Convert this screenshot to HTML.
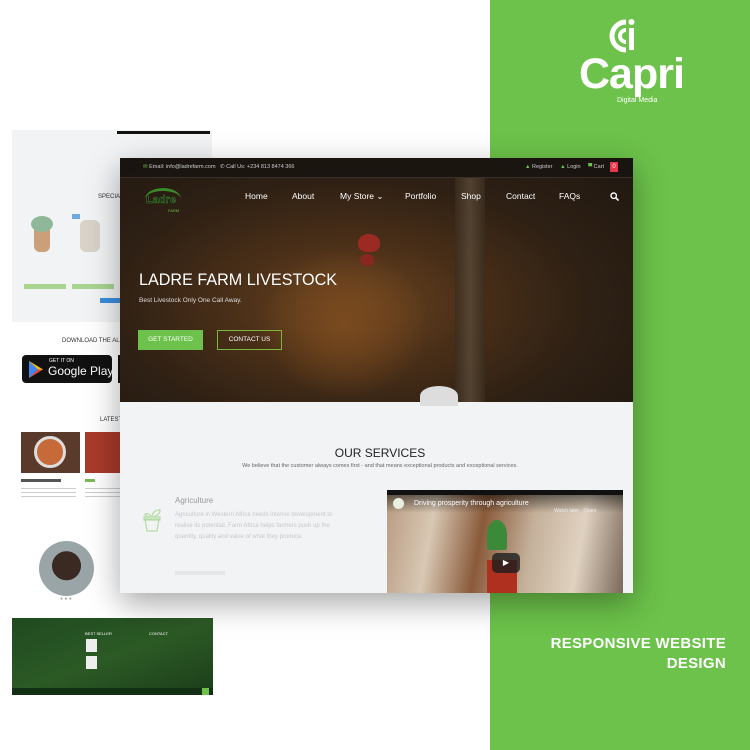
<!DOCTYPE html>
<html><head><meta charset="utf-8"><style>
*{margin:0;padding:0;box-sizing:border-box}
body{width:750px;height:750px;position:relative;overflow:hidden;background:#fff;font-family:"Liberation Sans",sans-serif}
.a{position:absolute}
.green{left:490px;top:0;width:260px;height:750px;background:#6cc24a}
.t{white-space:nowrap}
</style></head><body>
<div class="a green"></div>
<svg class="a" style="left:608px;top:16px" width="36" height="40" viewBox="0 0 36 40">
<path d="M18 6 A14 14 0 1 0 18 34" stroke="#fff" stroke-width="5" fill="none"/>
<path d="M18 14 A6 6 0 1 0 18 26" stroke="#fff" stroke-width="4" fill="none"/>
<rect x="21" y="12" width="5" height="22" fill="#fff"/><circle cx="23.5" cy="6" r="3" fill="#fff"/>
</svg>
<div class="a t" style="left:579px;top:50px;font-size:43px;font-weight:bold;color:#fff;letter-spacing:-1px">Capri</div>
<div class="a t" style="left:617px;top:97px;font-size:7px;color:#fff">Digital Media</div>
<div class="a t" style="right:24px;top:634px;font-size:15px;font-weight:900;color:#fff;text-align:right;line-height:20px;letter-spacing:.3px">RESPONSIVE WEBSITE<br>DESIGN</div>

<div class="a" style="left:12px;top:130px;width:200px;height:192px;background:#f1f3f5"></div>
<div class="a" style="left:117px;top:131px;width:93px;height:3px;background:#111"></div>
<div class="a t" style="left:98px;top:194px;font-size:6px;color:#333">SPECIAL O</div>
<div class="a" style="left:34px;top:222px;width:16px;height:30px;background:#c9a07a;border-radius:4px 4px 6px 6px"></div>
<div class="a" style="left:31px;top:216px;width:22px;height:16px;background:#8fb89a;border-radius:50%"></div>
<div class="a" style="left:80px;top:220px;width:20px;height:32px;background:#d8d2c8;border-radius:6px"></div>
<div class="a" style="left:72px;top:214px;width:8px;height:5px;background:#6ea8dc"></div>
<div class="a" style="left:24px;top:284px;width:42px;height:5px;background:#a7d48f"></div>
<div class="a" style="left:72px;top:284px;width:42px;height:5px;background:#a7d48f"></div>
<div class="a" style="left:100px;top:298px;width:20px;height:5px;background:#3a8ee0"></div>
<div class="a t" style="left:62px;top:338px;font-size:6px;color:#333">DOWNLOAD THE ALL NEW L</div>
<div class="a" style="left:22px;top:355px;width:90px;height:28px;background:#111;border-radius:4px"></div>
<svg class="a" style="left:28px;top:361px" width="16" height="17" viewBox="0 0 16 17"><path d="M1 0 L15 8.5 L1 17Z" fill="#34a853"/><path d="M1 0 L10 8.5 L1 17Z" fill="#4285f4"/><path d="M10 8.5 L15 8.5 L1 17Z" fill="#ea4335"/><path d="M10 8.5L15 8.5 L1 0Z" fill="#fbbc04"/></svg>
<div class="a t" style="left:49px;top:358px;font-size:5px;color:#fff">GET IT ON</div>
<div class="a t" style="left:48px;top:364px;font-size:12px;color:#fff">Google Play</div>
<div class="a" style="left:118px;top:355px;width:4px;height:28px;background:#111"></div>
<div class="a t" style="left:100px;top:417px;font-size:6px;color:#333">LATEST N</div>
<div class="a" style="left:21px;top:432px;width:59px;height:41px;background:#5a3a2a"></div>
<div class="a" style="left:34px;top:436px;width:32px;height:32px;background:#c76a3a;border-radius:50%;border:3px solid #ddd"></div>
<div class="a" style="left:85px;top:432px;width:35px;height:41px;background:#a83a2a"></div>
<div class="a" style="left:21px;top:479px;width:40px;height:3px;background:#555"></div>
<div class="a" style="left:85px;top:479px;width:10px;height:3px;background:#7ab854"></div>
<div class="a" style="left:21px;top:488px;width:55px;height:12px;background:repeating-linear-gradient(#ccc 0 1px,#fff 1px 4px)"></div>
<div class="a" style="left:85px;top:488px;width:35px;height:12px;background:repeating-linear-gradient(#ccc 0 1px,#fff 1px 4px)"></div>
<div class="a" style="left:39px;top:541px;width:55px;height:55px;border-radius:50%;background:radial-gradient(circle at 50% 45%,#3a2a22 0 35%,#9aa5a8 36%)"></div>
<div class="a t" style="left:60px;top:596px;font-size:5px;color:#aaa">● ● ●</div>
<div class="a" style="left:12px;top:618px;width:201px;height:77px;background:linear-gradient(160deg,#1f4a20,#2c5a25 50%,#1b3d1a)"></div>
<div class="a" style="left:12px;top:688px;width:201px;height:7px;background:#143014"></div>
<div class="a" style="left:202px;top:688px;width:7px;height:7px;background:#6cc24a"></div>
<div class="a t" style="left:85px;top:631px;font-size:4px;color:#fff">BEST SELLER</div>
<div class="a t" style="left:149px;top:631px;font-size:4px;color:#fff">CONTACT</div>
<div class="a" style="left:86px;top:639px;width:11px;height:13px;background:#eee"></div>
<div class="a" style="left:86px;top:656px;width:11px;height:13px;background:#eee"></div>

<div class="a" style="left:120px;top:158px;width:513px;height:435px;box-shadow:0 10px 30px rgba(0,0,0,.35);background:#f2f3f5;overflow:hidden">
 <div class="a" style="left:0;top:0;width:513px;height:244px;background:radial-gradient(ellipse at 45% 60%,#6b4420 0,#4a2f18 30%,#2e2014 60%,#1e1711 100%)"></div>
 <div class="a" style="left:140px;top:90px;width:170px;height:150px;border-radius:50%;background:radial-gradient(#7a4a1e,rgba(90,55,25,0) 70%)"></div>
 <div class="a" style="left:335px;top:20px;width:30px;height:224px;background:linear-gradient(90deg,#3a2c1e,#5a4a38,#3a2c1e);opacity:.8"></div>
 <div class="a" style="left:238px;top:76px;width:22px;height:18px;background:#9a2a22;border-radius:50% 50% 40% 40%"></div>
 <div class="a" style="left:240px;top:96px;width:14px;height:12px;background:#8a2620;border-radius:50%"></div>
 <div class="a" style="left:300px;top:228px;width:38px;height:20px;background:#ddd;border-radius:50% 50% 0 0"></div>
 <div class="a" style="left:0;top:0;width:513px;height:20px;background:rgba(25,20,16,.85);border-bottom:1px solid #3a3028"></div>
 <div class="a t" style="left:23px;top:6px;font-size:5.5px;color:#ccc"><span style="color:#6cc24a">✉</span> Email: info@ladrefarm.com</div>
 <div class="a t" style="left:100px;top:6px;font-size:5.5px;color:#ccc">✆ Call Us: +234 813 8474 366</div>
 <div class="a t" style="left:405px;top:6px;font-size:5.5px;color:#ccc"><span style="color:#6cc24a">▲</span> Register &nbsp;&nbsp;&nbsp; <span style="color:#6cc24a">▲</span> Login &nbsp;&nbsp;&nbsp; <span style="color:#6cc24a">▀</span> Cart</div>
 <div class="a" style="left:490px;top:4px;width:8px;height:10px;background:#e8364a;color:#fff;font-size:6px;text-align:center;line-height:10px">0</div>
 <div class="a" style="left:25px;top:30px;width:36px;height:22px;border-top:3px solid #3a8a2a;border-radius:50% 50% 0 0"></div>
 <div class="a t" style="left:26px;top:36px;font-size:11px;font-weight:bold;color:#1a1a1a;-webkit-text-stroke:.5px #3a8a2a">Ladre</div>
 <div class="a t" style="left:48px;top:50px;font-size:4px;color:#6cc24a">FARM</div>
 <div class="a t" style="left:125px;top:33px;font-size:8.5px;color:#fff">Home</div>
 <div class="a t" style="left:172px;top:33px;font-size:8.5px;color:#fff">About</div>
 <div class="a t" style="left:220px;top:33px;font-size:8.5px;color:#fff">My Store ⌄</div>
 <div class="a t" style="left:285px;top:33px;font-size:8.5px;color:#fff">Portfolio</div>
 <div class="a t" style="left:341px;top:33px;font-size:8.5px;color:#fff">Shop</div>
 <div class="a t" style="left:386px;top:33px;font-size:8.5px;color:#fff">Contact</div>
 <div class="a t" style="left:439px;top:33px;font-size:8.5px;color:#fff">FAQs</div>
 <svg class="a" style="left:490px;top:34px" width="9" height="9" viewBox="0 0 9 9"><circle cx="3.7" cy="3.7" r="2.7" stroke="#fff" stroke-width="1.4" fill="none"/><path d="M5.8 5.8L8.5 8.5" stroke="#fff" stroke-width="1.6"/></svg>
 <div class="a t" style="left:19px;top:112px;font-size:17px;color:#fff;transform:scaleX(.95);transform-origin:left">LADRE FARM LIVESTOCK</div>
 <div class="a t" style="left:19px;top:139px;font-size:6.5px;color:#ddd">Best Livestock Only One Call Away.</div>
 <div class="a" style="left:18px;top:172px;width:65px;height:20px;background:#6cc24a;color:#fff;font-size:6.5px;text-align:center;line-height:20px">GET STARTED</div>
 <div class="a" style="left:97px;top:172px;width:65px;height:20px;border:1px solid #7ab83a;color:#fff;font-size:6.5px;text-align:center;line-height:18px">CONTACT US</div>
 <div class="a t" style="left:0;top:288px;width:520px;text-align:center;font-size:12px;color:#222">OUR SERVICES</div>
 <div class="a t" style="left:0;top:305px;width:520px;text-align:center;font-size:5.5px;color:#666">We believe that the customer always comes first - and that means exceptional products and exceptional services.</div>
 <svg class="a" style="left:22px;top:350px" width="20" height="24" viewBox="0 0 20 24"><path d="M3 11h14l-2 12H5z M2 9h16v3H2z M10 9c0-5 4-7 8-7c0 4-3 6-8 7z M9 9c-1-3-4-4-6-3c0 2 3 3 6 3z" stroke="#b5dca2" stroke-width="1.2" fill="none"/></svg>
 <div class="a t" style="left:55px;top:338px;font-size:8px;color:#999">Agriculture</div>
 <div class="a" style="left:55px;top:352px;font-size:6px;color:#c8c8c8;line-height:11px;width:160px">Agriculture in Western Africa needs intense development to realise its potential. Farm Africa helps farmers push up the quantity, quality and value of what they produce.</div>
 <div class="a" style="left:55px;top:413px;width:50px;height:4px;background:#e6e6e6"></div>
 <div class="a" style="left:267px;top:332px;width:236px;height:103px;background:linear-gradient(100deg,#b89a80 0,#d8c8b4 20%,#8a5a3a 40%,#c4b09a 60%,#e0d2c0 80%,#7a6858);overflow:hidden">
  <div class="a" style="left:0;top:0;width:236px;height:5px;background:#111"></div>
  <div class="a" style="left:0;top:5px;width:236px;height:18px;background:linear-gradient(rgba(0,0,0,.5),rgba(0,0,0,0))"></div>
  <div class="a" style="left:100px;top:30px;width:20px;height:30px;background:#3a8a3a;border-radius:50% 50% 10% 10%"></div>
  <div class="a" style="left:100px;top:70px;width:30px;height:33px;background:#b03020"></div>
  <div class="a" style="left:6px;top:8px;width:11px;height:11px;border-radius:50%;background:#e8f0e0"></div>
  <div class="a t" style="left:27px;top:10px;font-size:7px;color:#fff">Driving prosperity through agriculture</div>
  <div class="a t" style="left:167px;top:18px;font-size:5px;color:#eee">Watch later &nbsp; Share</div>
  <div class="a" style="left:105px;top:63px;width:28px;height:20px;background:rgba(30,30,30,.8);border-radius:5px;color:#fff;font-size:8px;text-align:center;line-height:20px">▶</div>
 </div>
</div>
</body></html>
